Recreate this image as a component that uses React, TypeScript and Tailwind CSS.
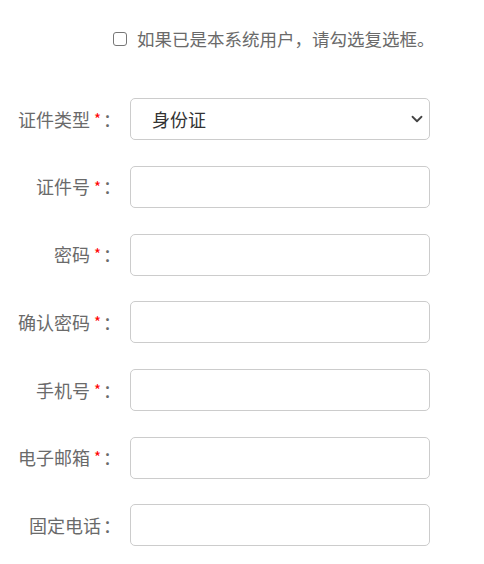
import { ChevronDown } from 'lucide-react'

const FIELDS = [
  { label: '证件号', required: true },
  { label: '密码', required: true },
  { label: '确认密码', required: true },
  { label: '手机号', required: true },
  { label: '电子邮箱', required: true },
  { label: '固定电话', required: false },
]

const FONT = { fontFamily: '"Microsoft YaHei", "Noto Sans CJK SC", "Noto Sans", sans-serif' }

function Label({ text, required }: { text: string; required: boolean }) {
  return (
    <label className="flex w-[121px] shrink-0 items-center justify-end text-[18px] text-[#6a6a6a]">
      {text}
      {required && <span className="ml-[4px] text-[15px] text-[#f00]">*</span>}
      <span className="ml-[2px]">：</span>
    </label>
  )
}

export default function App() {
  return (
    <div className="min-h-[564px] w-[484px] bg-white" style={FONT}>
      <div className="flex items-center pl-[113px] pt-[26px]">
        <input type="checkbox" className="h-[14px] w-[14px] appearance-none rounded-[3px] border border-[#777] bg-white" />
        <span className="ml-[10px] text-[17.5px] text-[#6a6a6a]">如果已是本系统用户，请勾选复选框。</span>
      </div>
      <div className="mt-[46px] flex flex-col gap-[25.7px]">
        <div className="flex items-center">
          <Label text="证件类型" required />
          <div className="relative ml-[9px] flex h-[42px] w-[300px] items-center rounded-[5px] border border-[#ccc] pl-[21px] text-[18px] text-[#333]">
            身份证
            <ChevronDown className="absolute right-[3px] top-[11px] h-[18px] w-[18px] text-[#444]" strokeWidth={2.4} />
          </div>
        </div>
        {FIELDS.map((f) => (
          <div key={f.label} className="flex items-center">
            <Label text={f.label} required={f.required} />
            <input className="ml-[9px] h-[42px] w-[300px] rounded-[5px] border border-[#ccc] bg-white px-3 outline-none" />
          </div>
        ))}
      </div>
    </div>
  )
}
